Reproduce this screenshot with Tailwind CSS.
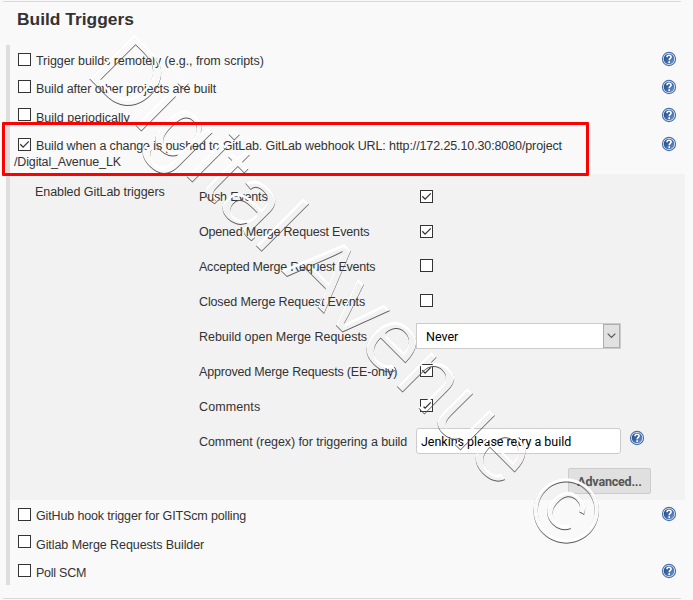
<!DOCTYPE html>
<html lang="en">
<head>
<meta charset="utf-8">
<title>Build Triggers</title>
<script src="https://cdn.jsdelivr.net/npm/@tailwindcss/browser@4"></script>
</head>
<body class="bg-[#f9f9f9]">
<svg class="absolute w-0 h-0">
  <defs>
    <linearGradient id="blue" x1="0" y1="0" x2="1" y2="1"><stop offset="0" stop-color="#174684"/><stop offset=".5" stop-color="#3f68a4"/><stop offset="1" stop-color="#7fa0ca"/></linearGradient>
  </defs>
  <symbol id="check" viewBox="0 0 13 13"><path d="M2.3 6.3 5.1 9.1 10.8 3.4" fill="none" stroke="#333" stroke-width="1.3"/></symbol>
  <symbol id="help" viewBox="0 0 16 16">
    <circle cx="8" cy="8" r="6.6" fill="#e9eff7" stroke="#4b73ab" stroke-width="1.1"/>
    <circle cx="8" cy="8" r="5.3" fill="url(#blue)"/>
    <path d="M6 6.3C6 4.9 6.9 4.3 8 4.3s2.1.7 2.1 1.8C10.1 7.4 8.2 7.5 8.2 9.2M8.2 10.3v1.6" fill="none" stroke="#fff" stroke-width="1.6"/>
  </symbol>
</svg>
<main class="relative w-[693px] h-[600px] overflow-hidden px-[3px] pt-px font-['Liberation_Sans',Arial,sans-serif] text-[12.5px] leading-4 text-[#333]">
  <div class="w-[678px] h-px bg-[#d9d9d9]"></div>
  <h1 class="h-[43px] pt-[7px] pl-[14px] text-[17.4px] leading-[20px] font-bold whitespace-nowrap">Build Triggers</h1>
  <section class="ml-[3px] w-[679px] h-[540px] border-l-4 border-[#dedede]">
    <div class="flex items-start h-7 pl-2">
      <span class="w-[13px] h-[13px] mt-2 mr-[5px] border border-[#333] bg-white"></span>
      <span class="mt-2 whitespace-nowrap tracking-[-0.07px]">Trigger builds remotely (e.g., from scripts)</span>
      <svg class="w-4 h-4 ml-auto mr-2 mt-[6px]"><use href="#help"/></svg>
    </div>
    <div class="flex items-start h-7 pl-2">
      <span class="w-[13px] h-[13px] mt-[7px] mr-[5px] border border-[#333] bg-white"></span>
      <span class="mt-2 whitespace-nowrap tracking-[-0.09px]">Build after other projects are built</span>
      <svg class="w-4 h-4 ml-auto mr-2 mt-[6px]"><use href="#help"/></svg>
    </div>
    <div class="flex items-start h-7 pl-2">
      <span class="w-[13px] h-[13px] mt-[7px] mr-[5px] border border-[#333] bg-white"></span>
      <span class="mt-[9px] whitespace-nowrap">Build periodically</span>
      <svg class="w-4 h-4 ml-auto mr-2 mt-[6px]"><use href="#help"/></svg>
    </div>
    <div class="flex items-start h-[45px] pl-1">
      <div class="flex flex-col pt-[9px]">
        <div class="flex pl-1"><span class="w-[13px] h-[13px] mr-[5px] border border-[#333] bg-white"><svg class="w-[13px] h-[13px] -m-px"><use href="#check"/></svg></span><span class="whitespace-nowrap tracking-[-0.113px]">Build when a change is pushed to GitLab. GitLab webhook URL: http://172.25.10.30:8080/project</span></div>
        <span class="tracking-[-0.15px]">/Digital_Avenue_LK</span>
      </div>
      <svg class="w-4 h-4 ml-auto mr-2 mt-[7px]"><use href="#help"/></svg>
    </div>
    <div class="flex h-[326px] bg-[#f2f2f2]">
      <div class="w-[189px] pl-[25px] pt-[10px] tracking-[-0.07px]">Enabled GitLab triggers</div>
      <div class="w-[486px] pt-[5px]">
        <div class="flex items-center h-[35px]"><span class="w-[221px] tracking-[-0.15px]">Push Events</span><span class="w-[13px] h-[13px] border border-[#333] bg-white"><svg class="w-[13px] h-[13px] -m-px"><use href="#check"/></svg></span></div>
        <div class="flex items-center h-[35px]"><span class="w-[221px] tracking-[-0.18px]">Opened Merge Request Events</span><span class="w-[13px] h-[13px] border border-[#333] bg-white"><svg class="w-[13px] h-[13px] -m-px"><use href="#check"/></svg></span></div>
        <div class="flex items-center h-[35px]"><span class="w-[221px] tracking-[-0.22px]">Accepted Merge Request Events</span><span class="mb-[2px] w-[13px] h-[13px] border border-[#333] bg-white"></span></div>
        <div class="flex items-center h-[35px]"><span class="w-[221px] tracking-[-0.13px]">Closed Merge Request Events</span><span class="mb-[2px] w-[13px] h-[13px] border border-[#333] bg-white"></span></div>
        <div class="flex items-center h-[35px]"><span class="w-[217px] tracking-[-0.03px]">Rebuild open Merge Requests</span>
          <div class="mb-[2px] flex w-[205px] h-[26px] border border-[#ccc] bg-white text-black font-[Roboto,sans-serif]"><span class="pl-[9px] leading-[25px]">Never</span><span class="ml-auto flex w-[17px] h-6 items-center justify-center border border-[#adadad] bg-[#e1e1e1]"><svg class="w-[9px] h-[6px]" viewBox="0 0 9 6"><path d="M.7.7 4.5 4.5 8.3.7" fill="none" stroke="#555" stroke-width="1.2"/></svg></span></div>
        </div>
        <div class="flex items-center h-[35px]"><span class="w-[221px] tracking-[-0.18px]">Approved Merge Requests (EE-only)</span><span class="mb-[2px] w-[13px] h-[13px] border border-[#333] bg-white"><svg class="w-[13px] h-[13px] -m-px"><use href="#check"/></svg></span></div>
        <div class="flex items-center h-[35px]"><span class="w-[221px] tracking-[0.1px]">Comments</span><span class="mb-[2px] w-[13px] h-[13px] border border-[#333] bg-white"><svg class="w-[13px] h-[13px] -m-px"><use href="#check"/></svg></span></div>
        <div class="flex items-center h-[35px]"><span class="w-[217px] whitespace-nowrap tracking-[-0.08px]">Comment (regex) for triggering a build</span>
          <div class="mb-[2px] w-[205px] h-[26px] pl-1 rounded-[3px] border border-[#ccc] bg-white text-black leading-[25px] font-[Roboto,sans-serif] tracking-[-0.03px]">Jenkins please retry a build</div>
          <svg class="w-4 h-4 ml-2 mb-[8px]"><use href="#help"/></svg>
        </div>
        <div class="ml-[369px] mt-[9px] w-[83px] h-[26px] rounded-[2px] border border-[#ccc] bg-[#e0e0e0] text-center leading-[25px] font-bold text-[#555] font-[Roboto,sans-serif] tracking-[-0.2px]">Advanced...</div>
      </div>
    </div>
    <div class="flex items-start h-[29px] pl-2">
      <span class="w-[13px] h-[13px] mt-2 mr-[5px] border border-[#333] bg-white"></span>
      <span class="mt-2 whitespace-nowrap tracking-[-0.14px]">GitHub hook trigger for GITScm polling</span>
      <svg class="w-4 h-4 ml-auto mr-2 mt-[6px]"><use href="#help"/></svg>
    </div>
    <div class="flex items-start h-7 pl-2">
      <span class="w-[13px] h-[13px] mt-[6px] mr-[5px] border border-[#333] bg-white"></span>
      <span class="mt-2 whitespace-nowrap tracking-[-0.07px]">Gitlab Merge Requests Builder</span>
    </div>
    <div class="flex items-start h-7 pl-2">
      <span class="w-[13px] h-[13px] mt-[7px] mr-[5px] border border-[#333] bg-white"></span>
      <span class="mt-2 whitespace-nowrap tracking-[-0.25px]">Poll SCM</span>
      <svg class="w-4 h-4 ml-auto mr-2 mt-[6px]"><use href="#help"/></svg>
    </div>
  </section>
  <div class="mt-[13px] w-[678px] h-px bg-[#d9d9d9]"></div>

  <!-- embossed watermark: light upper edge, dark lower edge -->
  <svg class="absolute left-0 top-0 w-[693px] h-[600px] pointer-events-none" viewBox="0 0 693 600">
    <filter id="emboss" filterUnits="userSpaceOnUse" x="0" y="0" width="693" height="600" color-interpolation-filters="sRGB">
      <feOffset in="SourceAlpha" dx="0" dy="3" result="down"/>
      <feComposite in="SourceAlpha" in2="down" operator="out" result="topEdge"/>
      <feFlood flood-color="#fff"/><feComposite in2="topEdge" operator="in" result="light"/>
      <feOffset in="SourceAlpha" dx="0" dy="-1" result="up"/>
      <feComposite in="SourceAlpha" in2="up" operator="out" result="lowEdge"/>
      <feFlood flood-color="#555"/><feComposite in2="lowEdge" operator="in" result="dark"/>
      <feMerge><feMergeNode in="light"/><feMergeNode in="dark"/></feMerge>
    </filter>
    <g filter="url(#emboss)"><text transform="translate(84 74) rotate(45)" class="font-['Liberation_Sans',Arial,sans-serif] text-[92.6px]">Digital Avenue ©</text></g>
  </svg>
  <div class="absolute left-[2px] top-[122px] w-[587px] h-[54px] border-3 border-[#f00] rounded-[1px]"></div>
</main>
</body>
</html>
